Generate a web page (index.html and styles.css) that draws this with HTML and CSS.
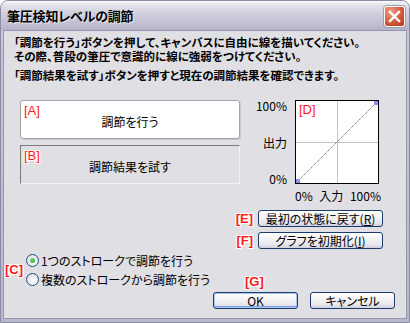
FILE: index.html
```html
<!DOCTYPE html>
<html lang="ja">
<head>
  <meta charset="UTF-8" />
  <title>筆圧検知レベルの調節</title>
  <link rel="stylesheet" href="styles.css">
</head>
<body>
  <div class="window">
    <div class="titlebar">
      <span class="title">筆圧検知レベルの調節</span>
      <span class="close-btn">
        <svg width="21" height="21" viewBox="0 0 21 21">
          <path d="M6 6 L15 15 M15 6 L6 15" stroke="#fff" stroke-width="2.4" stroke-linecap="square" />
        </svg>
      </span>
    </div>

    <div class="client">
      <p class="intro">「調節を行う」ボタンを押して、キャンバスに自由に線を描いてください。<br>その際、普段の筆圧で意識的に線に強弱をつけてください。</p>
      <p class="intro intro-2">「調節結果を試す」ボタンを押すと現在の調節結果を確認できます。</p>

      <div class="main">
        <div class="pad-col">
          <div class="pad pad-draw"><span class="tag tag-pad">[A]</span>調節を行う</div>
          <div class="pad pad-test"><span class="tag tag-pad">[B]</span>調節結果を試す</div>
        </div>

        <div class="graph">
          <div class="axis-y">
            <span>100%</span>
            <span>出力</span>
            <span>0%</span>
          </div>
          <div class="plot">
            <svg width="84" height="84" viewBox="0 0 84 84">
              <rect x="0.5" y="0.5" width="83" height="83" fill="#fff" stroke="#000" />
              <line x1="42.5" y1="1" x2="42.5" y2="83" stroke="#c4c4c4" />
              <line x1="1" y1="42.5" x2="83" y2="42.5" stroke="#c4c4c4" />
              <line x1="2" y1="82" x2="82" y2="2" stroke="#555" stroke-dasharray="1 1" />
              <rect x="1" y="79" width="4" height="4" fill="#8c8cf0" />
              <rect x="79" y="1" width="4" height="4" fill="#8c8cf0" />
            </svg>
            <span class="tag tag-plot">[D]</span>
          </div>
          <div class="axis-x">
            <span>0%</span>
            <span>入力</span>
            <span>100%</span>
          </div>
        </div>
      </div>

      <div class="side-actions">
        <div class="side-row"><span class="tag tag-bold">[E]</span><button class="xp-btn side-btn" type="button">最初の状態に戻す(<u>R</u>)</button></div>
        <div class="side-row"><span class="tag tag-bold">[F]</span><button class="xp-btn side-btn" type="button">グラフを初期化(<u>I</u>)</button></div>
      </div>

      <div class="bottom">
        <div class="radio-group">
          <span class="tag tag-bold">[C]</span>
          <div class="radios">
            <label class="radio-row"><span class="radio checked"></span>1つのストロークで調節を行う</label>
            <label class="radio-row"><span class="radio"></span>複数のストロークから調節を行う</label>
          </div>
        </div>
        <div class="dialog-buttons">
          <div class="ok-wrap">
            <span class="tag tag-bold tag-ok">[G]</span>
            <button class="xp-btn dlg-btn default-btn" type="button">OK</button>
          </div>
          <button class="xp-btn dlg-btn" type="button">キャンセル</button>
        </div>
      </div>
    </div>
  </div>
</body>
</html>
```

FILE: styles.css
```css
html, body {
  margin: 0;
  padding: 0;
}

body {
  width: 410px;
  height: 323px;
  overflow: hidden;
  background: #fff;
  font-family: "Noto Sans CJK JP", sans-serif;
  font-size: 12px;
  font-feature-settings: "palt";
  color: #000;
}

.window {
  width: 410px;
  height: 323px;
  box-sizing: border-box;
  display: flex;
  flex-direction: column;
  border: 1px solid #8a8aa3;
  border-radius: 8px 8px 0 0;
  background: linear-gradient(#c9c9d8, #b8b7cb);
}

.titlebar {
  height: 29px;
  flex: none;
  display: flex;
  align-items: center;
  justify-content: space-between;
  padding: 0 4px 0 6px;
  border-radius: 7px 7px 0 0;
  background: linear-gradient(#fbfbfd 0%, #e4e4ec 12%, #cfcedd 45%, #c2c1d4 75%, #b3b2c8 100%);
}

.title {
  font-size: 13px;
  font-weight: bold;
  letter-spacing: -0.2px;
  text-shadow: 1px 1px 0 rgba(255, 255, 255, 0.6);
}

.close-btn {
  width: 21px;
  height: 21px;
  margin-top: 2px;
  box-sizing: border-box;
  border: 1px solid #fff;
  border-radius: 3px;
  background: radial-gradient(circle at 30% 25%, #f09a82, #d45a3e 55%, #b7321c);
  box-shadow: 0 0 0 1px #a0a0b0;
  display: flex;
}

.close-btn svg {
  margin: -1px;
}

.client {
  flex: 1;
  margin: 0 2px 3px 2px;
  border: 1px solid #9595ad;
  background: #e0dfe3;
  display: flex;
  flex-direction: column;
}

.intro {
  margin: 4px 0 0 10px;
  font-size: 11.5px;
  font-weight: bold;
  line-height: 14px;
  white-space: nowrap;
}

.intro-2 {
  margin-top: 5px;
}

.main {
  display: flex;
  justify-content: space-between;
  margin: 18px 27px 0 16px;
}

.pad-col {
  display: flex;
  flex-direction: column;
  gap: 6px;
}

.pad {
  position: relative;
  width: 220px;
  height: 39px;
  box-sizing: border-box;
  display: flex;
  align-items: center;
  justify-content: center;
  padding-top: 4px;
  border-radius: 3px;
}

.pad-draw {
  background: #fff;
  border: 1px solid #a3a3ad;
  box-shadow: 1px 1px 0 #c8c8d0;
}

.pad-test {
  background: #e0dfe3;
  border: 1px solid #7a7a7a;
  border-right-color: #f2f2f2;
  border-bottom-color: #f2f2f2;
  border-radius: 0;
}

.tag {
  font-family: "Liberation Sans", sans-serif;
  font-size: 13px;
  color: #ff1a1a;
  text-shadow: 1px 0 0 #fff, -1px 0 0 #fff, 0 1px 0 #fff, 0 -1px 0 #fff, 1px 1px 0 #fff, -1px -1px 0 #fff, 1px -1px 0 #fff, -1px 1px 0 #fff;
  line-height: 14px;
}

.tag-bold {
  font-weight: bold;
}

.tag-pad {
  position: absolute;
  left: 3px;
  top: 3px;
}

.graph {
  display: grid;
  grid-template-columns: 26px 84px;
  grid-template-rows: 84px 18px;
  column-gap: 8px;
}

.axis-y {
  display: flex;
  flex-direction: column;
  justify-content: space-between;
  align-items: flex-end;
  line-height: 13px;
  margin: -1px 0 -1px 0;
}

.plot {
  position: relative;
  height: 84px;
}

.plot svg {
  display: block;
}

.tag-plot {
  position: absolute;
  left: 4px;
  top: 3px;
}

.axis-x {
  grid-column: 2;
  display: flex;
  justify-content: space-between;
  align-items: center;
  margin-right: -2px;
  padding-top: 4px;
  line-height: 13px;
}

.side-actions {
  display: flex;
  flex-direction: column;
  align-items: flex-end;
  gap: 5px;
  margin: 8px 23px 0 0;
}

.side-row {
  display: flex;
  align-items: center;
  gap: 5px;
}

.xp-btn {
  font-family: "Noto Sans CJK JP", sans-serif;
  font-size: 12px;
  font-feature-settings: "palt";
  color: #000;
  height: 17px;
  padding: 0;
  line-height: 15px;
  box-sizing: border-box;
  border: 1px solid #1c3d6b;
  border-radius: 3px;
  background: linear-gradient(#ffffff 0%, #f4f4f6 40%, #e6e5ec 80%, #cfcfdb 100%);
}

.xp-btn u {
  text-underline-offset: 1px;
}

.side-btn {
  width: 125px;
}

.bottom {
  flex: 1;
  display: flex;
  flex-direction: column;
  margin-top: 2px;
}

.radio-group {
  display: flex;
  align-items: center;
  margin-left: 1px;
}

.radios {
  display: flex;
  flex-direction: column;
  margin-left: 3px;
}

.radio-row {
  height: 19px;
  display: flex;
  align-items: center;
  gap: 2px;
}

.radio {
  width: 13px;
  height: 13px;
  box-sizing: border-box;
  border: 1px solid #1d5281;
  border-radius: 50%;
  background: radial-gradient(circle at 60% 65%, #fff, #e4e3ea 70%, #d2d1d9);
  display: flex;
  align-items: center;
  justify-content: center;
}

.radio.checked::after {
  content: "";
  width: 5px;
  height: 5px;
  border-radius: 50%;
  background: radial-gradient(circle at 40% 35%, #7de07d, #1f9a1f);
}

.dialog-buttons {
  display: flex;
  justify-content: flex-end;
  gap: 12px;
  margin: 3px 11px 0 0;
}

.ok-wrap {
  position: relative;
}

.tag-ok {
  position: absolute;
  left: 32px;
  top: -17px;
}

.dlg-btn {
  width: 85px;
}

.default-btn {
  box-shadow: inset 0 0 0 1px #a9c2ee, inset 0 -1px 0 1px #7fa4e4;
}
```
